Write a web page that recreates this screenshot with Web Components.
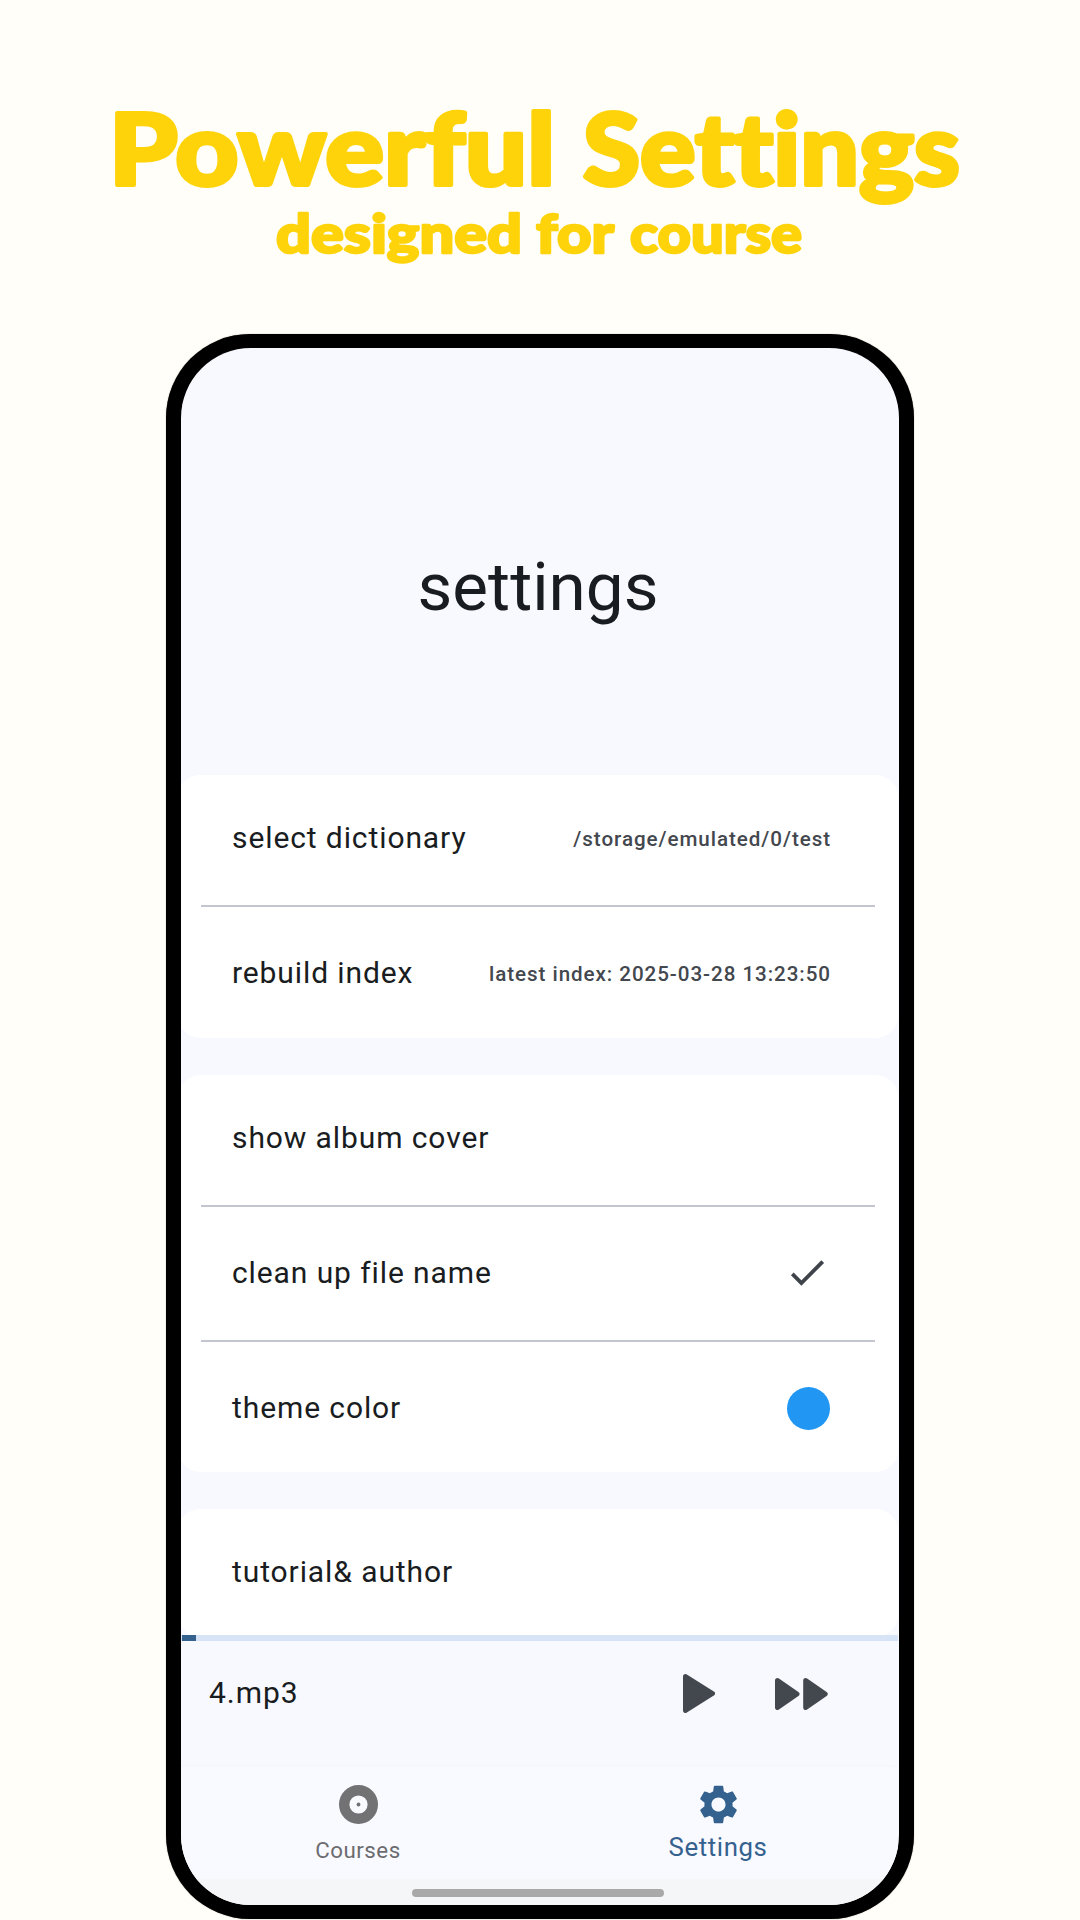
<!DOCTYPE html>
<html lang="en">
<head>
<meta charset="utf-8">
<title>Powerful Settings</title>
<style>
html,body{margin:0;height:100%;background:#fffef9}
body{width:1080px;height:1920px;overflow:hidden;font-family:Roboto,"Liberation Sans",sans-serif}
</style>
</head>
<body>
<promo-page>
  <promo-title slot="title"></promo-title>
  <phone-frame>
    <screen-title>settings</screen-title>
    <settings-list>
      <settings-card>
        <settings-row>select dictionary<span slot="value">/storage/emulated/0/test</span></settings-row>
        <row-divider></row-divider>
        <settings-row>rebuild index<span slot="value">latest index: 2025-03-28 13:23:50</span></settings-row>
      </settings-card>
      <settings-card>
        <settings-row>show album cover</settings-row>
        <row-divider></row-divider>
        <settings-row>clean up file name<ui-icon slot="value" name="check"></ui-icon></settings-row>
        <row-divider></row-divider>
        <settings-row>theme color<ui-icon slot="value" name="dot"></ui-icon></settings-row>
      </settings-card>
      <settings-card>
        <settings-row>tutorial&amp; author</settings-row>
      </settings-card>
    </settings-list>
    <mini-player>4.mp3</mini-player>
    <nav-bar>
      <nav-item icon="disc">Courses</nav-item>
      <nav-item icon="gear" active>Settings</nav-item>
    </nav-bar>
    <home-indicator></home-indicator>
  </phone-frame>
</promo-page>
<script>
const define = (name, html) => {
  const template = document.createElement('template');
  template.innerHTML = html;
  customElements.define(name, class extends HTMLElement {
    constructor() {
      super();
      this.attachShadow({mode: 'open'}).append(template.content.cloneNode(true));
    }
  });
};

const icons = {
  check: '<svg width="45" height="45" viewBox="0 0 45 45"><path d="M7.3 22.8 16.4 32 37.7 10.7" fill="none" stroke="#3f444b" stroke-width="3.8"/></svg>',
  dot: '<svg width="43" height="43" viewBox="0 0 43 43"><circle cx="21.5" cy="21.5" r="21.5" fill="#2196f3"/></svg>',
  play: '<svg width="32" height="39" viewBox="0 0 32 39"><path d="M2.5 2.5 29.5 19.5 2.5 36.5Z" fill="#43474e" stroke="#43474e" stroke-width="5" stroke-linejoin="round"/></svg>',
  forward: '<svg width="53" height="32" viewBox="0 0 53 32"><path d="M2.5 2.5 22 16 2.5 29.5ZM30.7 2.5 50.2 16 30.7 29.5Z" fill="#43474e" stroke="#43474e" stroke-width="5" stroke-linejoin="round"/></svg>',
  disc: '<svg width="47" height="47" viewBox="0 0 47 47"><circle cx="23.5" cy="23.5" r="14.3" fill="none" stroke="#727275" stroke-width="10.4"/><circle cx="23.5" cy="23.5" r="1.9" fill="#727275"/></svg>',
  gear: '<svg width="47" height="47" viewBox="0 0 24 24"><path fill="#35618e" d="M19.14 12.94c.04-.3.06-.61.06-.94 0-.32-.02-.64-.07-.94l2.03-1.58c.18-.14.23-.41.12-.61l-1.92-3.32c-.12-.22-.37-.29-.59-.22l-2.39.96c-.5-.38-1.03-.7-1.62-.94l-.36-2.54c-.04-.24-.24-.41-.48-.41h-3.84c-.24 0-.43.17-.47.41l-.36 2.54c-.59.24-1.13.57-1.62.94l-2.39-.96c-.22-.08-.47 0-.59.22L2.74 8.87c-.12.21-.08.47.12.61l2.03 1.58c-.05.3-.09.63-.09.94s.02.64.07.94l-2.03 1.58c-.18.14-.23.41-.12.61l1.92 3.32c.12.22.37.29.59.22l2.39-.96c.5.38 1.03.7 1.62.94l.36 2.54c.05.24.24.41.48.41h3.84c.24 0 .44-.17.47-.41l.36-2.54c.59-.24 1.13-.56 1.62-.94l2.39.96c.22.08.47 0 .59-.22l1.92-3.32c.12-.22.07-.47-.12-.61l-2.01-1.58zM12 15.6c-1.98 0-3.6-1.62-3.6-3.6s1.62-3.6 3.6-3.6 3.6 1.62 3.6 3.6-1.62 3.6-3.6 3.6z"/></svg>'
};
customElements.define('ui-icon', class extends HTMLElement {
  connectedCallback() {
    if (this.shadowRoot) return;
    this.attachShadow({mode: 'open'}).innerHTML =
      '<style>:host{display:block;line-height:0}svg{display:block}</style>' + icons[this.getAttribute('name')];
  }
});

define('promo-page', `<style>
:host{display:flex;flex-direction:column;align-items:center;width:1080px;height:1920px}
</style><slot name="title"></slot><slot></slot>`);

define('promo-title', `<style>
:host{display:block;width:1080px;height:334px}
svg{display:block}
text{font-family:Lato,sans-serif;font-weight:900;fill:#ffd30a;stroke:#ffd30a;stroke-linejoin:round;font-variant-ligatures:none}
.big{font-size:99px;stroke-width:4px}
.small{font-size:54px;stroke-width:2.4px}
</style>
<svg width="1080" height="334" viewBox="0 0 1080 334">
<text class="big" y="184.5" x="109" textLength="446" lengthAdjust="spacingAndGlyphs">Powerful</text>
<text class="big" y="184.5" x="583" textLength="377" lengthAdjust="spacingAndGlyphs">Settings</text>
<text class="small" y="252.5" x="276" textLength="246" lengthAdjust="spacingAndGlyphs">designed</text>
<text class="small" y="252.5" x="536" textLength="78" lengthAdjust="spacingAndGlyphs">for</text>
<text class="small" y="252.5" x="630" textLength="172" lengthAdjust="spacingAndGlyphs">course</text>
</svg>`);

define('phone-frame', `<style>
:host{display:block;box-sizing:border-box;width:748px;height:1585px;background:#000;border-radius:84px;padding:14px 15px;box-shadow:0 0 1px #746d5c}
main{display:flex;flex-direction:column;height:1557px;width:718px;border-radius:70px;overflow:hidden;background:#f8f9ff}
.canvas{display:flex;flex-direction:column;flex:none;width:720px;height:100%;margin-left:-3px}
</style><main><div class="canvas"><slot></slot></div></main>`);

define('screen-title', `<style>
:host{display:flex;flex:none;height:427px;align-items:center;justify-content:center;box-sizing:border-box;padding-top:51px;font-size:67.4px;line-height:80px;color:#191c20}
</style><slot></slot>`);

define('settings-list', `<style>
:host{display:flex;flex-direction:column;gap:37px;flex:none;height:860px;overflow:hidden}
</style><slot></slot>`);

define('settings-card', `<style>
:host{display:block;flex:none;background:#fff;border-radius:22px}
</style><slot></slot>`);

define('settings-row', `<style>
:host{display:flex;align-items:center;justify-content:space-between;height:127.5px;box-sizing:border-box;padding:0 67px 1px 54px;font-size:30px;line-height:40px;letter-spacing:.9px;color:#191c20}
::slotted(span){font-size:20.6px;font-weight:500;color:#43474e;letter-spacing:.94px;padding-top:2px}
::slotted(ui-icon){margin:2px 1px 0 0}
</style><span><slot></slot></span><slot name="value"></slot>`);

define('row-divider', `<style>
:host{display:flex;align-items:center;height:7.5px;padding:0 23px}
i{display:block;width:100%;height:2px;background:#c3c6cf}
</style><i></i>`);

define('mini-player', `<style>
:host{display:flex;flex-direction:column;flex:none;height:132px;font-size:30px;letter-spacing:.94px;color:#191c20}
.bar{height:6px;background:#d7e3f7;flex:none;padding-left:4px}
.bar i{display:block;height:6px;width:13.5px;background:#35618e}
.row{display:flex;align-items:center;height:105px;padding:0 70px 0 31px}
.name{flex:1;padding-bottom:2px}
.controls{display:flex;align-items:center;gap:60px}
</style><div class="bar"><i></i></div><div class="row"><span class="name"><slot></slot></span><div class="controls"><ui-icon name="play"></ui-icon><ui-icon name="forward"></ui-icon></div></div>`);

define('nav-bar', `<style>
:host{display:flex;flex:none;height:112px;background:#f9faff;box-shadow:0 -1px 3px rgba(0,0,0,.025)}
</style><slot></slot>`);

customElements.define('nav-item', class extends HTMLElement {
  connectedCallback() {
    if (this.shadowRoot) return;
    this.attachShadow({mode: 'open'}).innerHTML = `<style>
:host{display:flex;flex:1;flex-direction:column;align-items:center;padding-top:14px;font-size:22.3px;line-height:30px;letter-spacing:.5px;color:#6c6c6f}
:host([active]){font-size:25.8px;color:#35618e;letter-spacing:.6px}
span{margin-top:7px}
:host([active]) span{margin-top:4px}
</style><ui-icon name="${this.getAttribute('icon')}"></ui-icon><span><slot></slot></span>`;
  }
});

define('home-indicator', `<style>
:host{display:flex;flex:none;height:26px;background:#f5f6f8;justify-content:center;align-items:center}
i{width:252px;height:8px;border-radius:4px;background:#a9a9a9;margin-top:1px}
</style><i></i>`);
</script>
</body>
</html>
